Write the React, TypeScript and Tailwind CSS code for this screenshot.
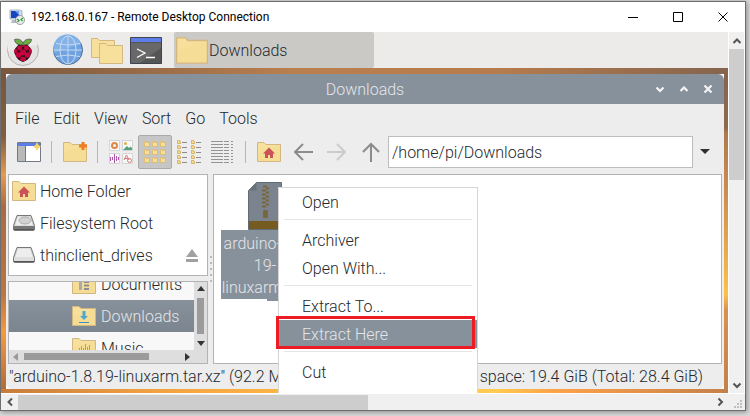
import type { ReactNode } from "react";

const Folder = ({ children, big = false }: { children?: ReactNode; big?: boolean }) => (
  <svg viewBox="0 0 24 20" className={big ? "h-[27px] w-8 shrink-0" : "h-5 w-6 shrink-0"} aria-hidden="true">
    <path d="M.5 19.5V.5h6.500l2 2h14.500v17z" fill="#f7e09b" stroke="#d3b782" />
    <path d="M1 10 L23 3V19H1z" fill="#f4d78b" opacity=".35" />
    {children}
  </svg>
);

const House = () => (
  <path d="M12 5.500l6 6h-2V16h-3v-3h-2v3H8v-4.500H6z" fill="#cb5357" />
);

const Raspberry = () => (
  <svg viewBox="0 0 32 32" className="size-8" aria-hidden="true">
    <circle cx="16" cy="16" r="15.500" fill="#e3e3e3" stroke="#b4b4b4" />
    <path d="M1 17A15 15 0 0 1 31 11z" fill="#ebebeb" />
    <path d="M16 9.500c3 0 5 1 6.500 3.500 3 3 2.500 6 1 8-1 4-4 5.500-7.500 7-3.500-1.500-6.500-3-7.500-7-1.500-2-2-5 1-8C11 10.500 13 9.500 16 9.500z" fill="#2b1019" />
    <g fill="#c7053d">
      <circle cx="16" cy="18.500" r="3" />
      <circle cx="12.500" cy="14" r="2.500" /><circle cx="19.500" cy="14" r="2.500" />
      <circle cx="11.500" cy="21" r="2.700" /><circle cx="20.500" cy="21" r="2.700" />
      <ellipse cx="8.700" cy="17" rx="1.500" ry="2.500" /><ellipse cx="23.300" cy="17" rx="1.500" ry="2.500" />
      <ellipse cx="16" cy="25" rx="2.800" ry="2.200" /><ellipse cx="16" cy="11.500" rx="2.200" ry="1.300" />
    </g>
    <path d="M15.500 11C10 11 8 9 7.500 5.500 11 4.500 15 5.500 16 9.500c1-4 5-5 8.500-4-.5 3.500-2.500 5.500-8 5.500z" fill="#6cab45" stroke="#2b2b2b" strokeWidth=".6" />
  </svg>
);

const Globe = () => (
  <svg viewBox="0 0 32 32" className="size-8" aria-hidden="true">
    <circle cx="16" cy="16" r="14.500" fill="#6ea2e0" stroke="#4f6f99" />
    <path d="M2 19A14 14 0 0 1 29 10z" fill="#83b2e8" />
    <g fill="none" stroke="#c5daf2">
      <ellipse cx="16" cy="16" rx="8" ry="14" />
      <path d="M16 2v28M2 16h28M4 9.500q12 3 24 0M4 22.500q12-3 24 0" />
    </g>
  </svg>
);

const Folders = () => (
  <svg viewBox="0 0 32 27" className="h-[27px] w-8" aria-hidden="true">
    <g fill="#f7e09b" stroke="#d3b782">
      <path d="M.5 20.500V1.500h6l2 2h15v17z" />
      <path d="M8.500 26.500V6.500h6l2 2h15v18z" />
    </g>
  </svg>
);

const Terminal = () => (
  <svg viewBox="0 0 32 27" className="h-[27px] w-8" aria-hidden="true">
    <path d="M.5.5h31v26H.5z" fill="#555" stroke="#3d4450" />
    <path d="M1 6h30v5L10 26H1z" fill="#686868" />
    <path d="M1 1h30v4H1z" fill="#5e7de8" />
    <path d="M7 12l8 4-8 4.500M16 20.500h9" fill="none" stroke="#fff" strokeWidth="1.300" />
  </svg>
);

const Remote = () => (
  <svg viewBox="0 0 16 16" className="size-4" aria-hidden="true">
    <path d="M1 1h10l2 1v8H1z" fill="#d4dbe8" stroke="#9aa6bc" strokeWidth=".8" />
    <path d="M2 2h8v7H2z" fill="#1545c0" />
    <path d="M6 2h4v4z" fill="#6ba2f2" />
    <path d="M3 11h5v3H2z" fill="#b7bdc7" />
    <circle cx="11" cy="11" r="4.500" fill="#ececec" stroke="#8a8a8a" strokeWidth=".8" />
    <path d="M8 10l2 1.500L8.500 13M14 9l-2 1.500 1.500 1.500" fill="none" stroke="#239b31" strokeWidth="1.200" />
  </svg>
);

const NewWindow = () => (
  <svg viewBox="0 0 24 20" className="h-5 w-6" aria-hidden="true">
    <path d="M.5.5h23v19H.5z" fill="#fff" stroke="#747a84" />
    <path d="M1 1h22v3H1z" fill="#5b7de6" />
    <path d="M1 4h7v15H1z" fill="#b9b9b9" />
    <path d="M8.500 4v15" stroke="#777" />
    <path d="M20 0l1.500 3L24 4.500 21.500 6 20 9l-1.500-3L16 4.500 18.500 3z" fill="#f5d565" />
  </svg>
);

const Thumbs = () => (
  <svg viewBox="0 0 24 24" className="size-6" aria-hidden="true">
    <g fill="#f8f8f8" stroke="#d5d5d5">
      <path d="M.5.5h10v10H.5zM13.500.5h10v10h-10zM.5 13.500h10v10H.5zM13.500 13.500h10v10h-10z" />
    </g>
    <circle cx="5.500" cy="5.500" r="2.500" fill="none" stroke="#df8747" strokeWidth="2" />
    <path d="M14 10l4-4 2 2 1.500-1.500L23 8v2z" fill="#54a17c" /><circle cx="16.500" cy="3.500" r="1.500" fill="#e2b243" />
    <path d="M1.500 17v4M3.500 17v3M5.500 14v9M7.500 16v5M9.500 17v3" stroke="#ae55ae" />
    <path d="M15 20l2.500-5 2.500 5M16 18.500h3" fill="none" stroke="#d77878" /><circle cx="20.500" cy="20.500" r="2" fill="none" stroke="#d77878" />
  </svg>
);

const IconGrid = () => (
  <svg viewBox="0 0 24 24" className="size-6" aria-hidden="true">
    {[1, 9, 17].map((y) => [1, 9, 17].map((x) => (
      <path key={`${x}-${y}`} d={`M${x + 0.5} ${y + 0.5}v5h5v-4h-3v-1z`} fill="#f7df94" stroke="#dcbd74" />
    )))}
  </svg>
);

const Compact = () => (
  <svg viewBox="0 0 24 24" className="size-6" aria-hidden="true">
    {[0, 5, 10, 15, 20].map((y) => (
      <g key={y}>
        <path d={`M.5 ${y + 0.5}v3h3v-2h-1v-1zM14.500 ${y + 0.5}v3h3v-2h-1v-1z`} fill="#f7df94" stroke="#d5b468" />
        <path d={`M5 ${y + 2.5}h5M19 ${y + 2.5}h5`} stroke="#8d8d8d" />
      </g>
    ))}
  </svg>
);

const Details = () => (
  <svg viewBox="0 0 24 24" className="size-6" aria-hidden="true">
    {[1, 4, 7, 10, 13, 16, 19, 22].map((y) => (
      <path key={y} d={`M0 ${y + 0.5}h12M13 ${y + 0.5}h5M20 ${y + 0.5}h2`} stroke="#939393" />
    ))}
  </svg>
);

const Arrow = ({ d, light = false }: { d: string; light?: boolean }) => (
  <svg viewBox="0 0 20 20" className="size-5" fill="none" stroke={light ? "#cbcbcb" : "#8b8b8b"} strokeWidth="2" aria-hidden="true">
    <path d={d} />
  </svg>
);

const Chevron = ({ d }: { d: string }) => (
  <svg viewBox="0 0 10 10" className="size-2.5" fill="none" stroke="#555" strokeWidth="2" aria-hidden="true">
    <path d={d} />
  </svg>
);

const Drive = ({ disk = false }: { disk?: boolean }) => (
  <svg viewBox="0 0 24 16" className="h-4 w-6 shrink-0" aria-hidden="true">
    <path d="M5 .5h14l3.500 10V14q0 1.500-1.500 1.500H3Q1.500 15.500 1.500 14v-3.500z" fill="#cecece" stroke="#777" />
    <path d="M6 1.500h12l3 9H3z" fill="#ededed" />
    {disk && <ellipse cx="13" cy="5.500" rx="6" ry="3.500" fill="#d2d2d2" stroke="#aaa" />}
    <path d="M2 11h20v3H2z" fill={disk ? "#777" : "#dedede"} />
    <path d="M2 14.500h20" stroke="#555" />
  </svg>
);

const Archive = () => (
  <svg viewBox="0 0 34 48" className="h-12 w-[34px]" aria-hidden="true">
    <path d="M8.500.5h25v47H.5V8.500z" fill="#7b848e" stroke="#626c77" />
    <path d="M8.500.5v8H.5z" fill="#68727d" />
    <path d="M1 39h32v8H1z" fill="#765b20" />
    <path d="M15 4.500h4M18 6.500h3M14 8.500h4M18 10.500h3M14 12.500h4M18 14.500h3M14 16.500h4M18 18.500h3M14 20.500h4M18 22.500h3M14 24.500h4" stroke="#78663c" strokeWidth="2" />
    <rect x="15" y="28" width="5" height="8" rx="1.500" fill="#78663c" />
  </svg>
);

const Rule = () => <div className="mx-[5px] mt-[3px] mb-1.5 h-px bg-[#e5e5e5]" />;
const ToolRule = () => <div className="h-[22px] w-px bg-[#b5b5b5]" />;

const MenuItem = ({ label }: { label: string }) => (
  <button className="block h-7 w-full pl-[23px] text-left">{label}</button>
);

export default function App() {
  return (
    <div className="h-screen w-full overflow-hidden bg-[#dadada] pt-px pr-1 pb-[5px] font-['Roboto',sans-serif] text-[16px] leading-[23px] font-light text-[#24292d]">
      <div className="flex h-full flex-col border border-[#6e6e6e] bg-white shadow-[1px_1px_5px_#888]">
        <header className="flex h-[30px] shrink-0 items-center pl-2">
          <Remote />
          <h1 className="ml-1.5 flex-1 text-[12px] font-normal text-black">
            192.168.0.167 - Remote Desktop Connection
          </h1>
          <div className="flex gap-[35px] pr-[17px]">
            {[["Minimize", "M0 5.500h10"], ["Maximize", "M.5.5h9v9h-9z"], ["Close", "M.5.5l9 9m0-9l-9 9"]].map(([name, d]) => (
              <button key={name} aria-label={name}>
                <svg viewBox="0 0 10 10" className="size-2.5" fill="none" stroke="#000"><path d={d} /></svg>
              </button>
            ))}
          </div>
        </header>

        <div className="flex min-h-0 flex-1">
          <main className="relative flex min-w-0 flex-1 flex-col overflow-hidden">
            <nav className="flex h-9 shrink-0 items-center bg-[#edebe9] pl-1.5">
              <button aria-label="Applications"><Raspberry /></button>
              <button aria-label="Web browser" className="ml-[13px]"><Globe /></button>
              <button aria-label="File manager" className="ml-[7px]"><Folders /></button>
              <button aria-label="Terminal" className="ml-[7px]"><Terminal /></button>
              <button className="ml-3 flex h-9 w-[200px] items-center rounded-xs bg-[#cbc9c5] pl-0.5">
                <Folder big /><span className="ml-px">Downloads</span>
              </button>
            </nav>
            <div className="h-1.5 shrink-0 bg-[linear-gradient(90deg,#79583f,#b97f4f_40%,#b67c4d_68%,#85644e)]" />

            <div className="flex min-h-0 flex-1">
              <div className="w-[5px] bg-[linear-gradient(180deg,#77563f,#80603f_20%,#e59a50_32%,#a86b42_42%,#b97645_70%,#f59a40_82%,#b06c3a)]" />
              <section className="flex min-w-0 flex-1 flex-col rounded-md bg-[#ededed]">
                <div className="flex h-[30px] shrink-0 items-center rounded-t-md bg-[#87919b] text-[#e3e6e9]">
                  <h2 className="flex-1 pl-[76px] text-center">Downloads</h2>
                  <div className="flex w-[76px] gap-3.5 pl-[7px]">
                    {[["Minimize window", "M1.500 3.500L5 7l3.500-3.500"], ["Maximize window", "M1.500 7L5 3.500 8.500 7"], ["Close window", "M1.500 1.500l7 7m0-7l-7 7"]].map(([name, d]) => (
                      <button key={name} aria-label={name}>
                        <svg viewBox="0 0 10 10" className="size-2.5" fill="none" stroke="#f4f4f4" strokeWidth="2.200"><path d={d} /></svg>
                      </button>
                    ))}
                  </div>
                </div>
                <div className="flex h-7 shrink-0 items-center gap-3.5 pl-[9px]">
                  {["File", "Edit", "View", "Sort", "Go", "Tools"].map((m) => <button key={m}>{m}</button>)}
                </div>
                <div className="flex h-[42px] shrink-0 items-center pr-3.5 pb-0.5 pl-[11px]">
                  <button aria-label="New window"><NewWindow /></button>
                  <div className="mx-2.5"><ToolRule /></div>
                  <button aria-label="New folder" className="ml-px">
                    <Folder><path d="M20 0v8M16 4h8" stroke="#ef7d22" strokeWidth="3" /></Folder>
                  </button>
                  <div className="mx-2.5"><ToolRule /></div>
                  <button aria-label="Thumbnails" className="ml-px"><Thumbs /></button>
                  <button aria-label="Icons" className="ml-[5px] flex size-[34px] items-center justify-center rounded-xs border border-[#aaa] bg-[#c6c6c6]"><IconGrid /></button>
                  <button aria-label="Compact list" className="ml-[5px]"><Compact /></button>
                  <button aria-label="Detailed list" className="ml-2.5"><Details /></button>
                  <div className="mx-2.5"><ToolRule /></div>
                  <button aria-label="Home" className="ml-px"><Folder><House /></Folder></button>
                  <button aria-label="Back" className="ml-3"><Arrow d="M20 10H2M10 2l-8 8 8 8" /></button>
                  <button aria-label="Forward" className="ml-3.5"><Arrow light d="M0 10h18M10 2l8 8-8 8" /></button>
                  <button aria-label="Up" className="ml-3.5"><Arrow d="M10 20V2M2 10l8-8 8 8" /></button>
                  <input aria-label="Path" defaultValue="/home/pi/Downloads" className="ml-[7px] h-8 min-w-0 flex-1 border border-[#bdbdbd] bg-white pl-[3px] outline-none" />
                  <button aria-label="Recent paths" className="ml-[7px]">
                    <svg viewBox="0 0 10 6" className="h-1.5 w-2.5"><path d="M0 0h10L5 5z" fill="#2c3135" /></svg>
                  </button>
                </div>

                <div className="flex min-h-0 flex-1 pr-0.5 pl-0.5">
                  <aside className="flex w-[200px] flex-col gap-[5px]">
                    <ul className="h-[102px] shrink-0 border border-[#b3b3b3] bg-white pr-[9px] pl-[3px]">
                      <li className="flex h-8 items-center gap-1"><Folder><House /></Folder>Home Folder</li>
                      <li className="flex h-8 items-center gap-1"><Drive disk />Filesystem Root</li>
                      <li className="flex h-8 items-center gap-1">
                        <Drive /><span className="flex-1">thinclient_drives</span>
                        <button aria-label="Eject">
                          <svg viewBox="0 0 12 13" className="h-[13px] w-3"><path d="M6 0l6 8H0zM0 10h12v3H0z" fill="#a1a1a1" /></svg>
                        </button>
                      </li>
                    </ul>
                    <div className="flex min-h-0 flex-1 flex-col border border-[#b3b3b3] bg-[#dedede]">
                      <div className="flex min-h-0 flex-1">
                        <ul className="flex-1 overflow-hidden bg-[#f8f8f8]">
                          <li className="-mt-3.5 flex h-8 items-center gap-[5px] pl-[63px]">
                            <Folder><path d="M7 7h3v9H7z" fill="#aaa" /><path d="M12 8h5M12 11.500h5M12 15h5" stroke="#8e8e8e" strokeWidth="2" /></Folder>Documents
                          </li>
                          <li className="flex h-8 items-center gap-[5px] bg-linear-to-b from-[#87919b] to-[#7b858f] pl-[63px] text-[#e3e6e9]">
                            <Folder><path d="M10.500 5h3v5h2.500l-4 4-4-4h2.500z" fill="#4ca8d0" /><path d="M7 16.500h10" stroke="#3794bd" /></Folder>Downloads
                          </li>
                          <li className="flex h-8 items-center gap-[5px] pl-[63px]">
                            <Folder><path d="M7.500 10v5M9.500 8v7M11.500 10v5M13.500 6v9M15.500 9v6M17.500 7v8" stroke="#c58da2" /></Folder>Music
                          </li>
                        </ul>
                        <div className="flex w-[13px] flex-col items-center py-1">
                          <svg viewBox="0 0 8 5" className="h-[5px] w-2"><path d="M0 5h8L4 0z" fill="#30363a" /></svg>
                          <div className="mt-[7px] mb-[7px] w-[7px] flex-1 bg-[#9b9b9b]" />
                          <svg viewBox="0 0 8 5" className="h-[5px] w-2"><path d="M0 0h8L4 5z" fill="#30363a" /></svg>
                        </div>
                      </div>
                      <div className="flex h-[13px] shrink-0 items-center pr-[17px] pl-1">
                        <svg viewBox="0 0 5 8" className="h-2 w-[5px]"><path d="M5 0v8L0 4z" fill="#999" /></svg>
                        <div className="mr-9 ml-1.5 h-[7px] flex-1 bg-[#9b9b9b]" />
                        <svg viewBox="0 0 5 8" className="h-2 w-[5px]"><path d="M0 0v8l5-4z" fill="#30363a" /></svg>
                      </div>
                    </div>
                  </aside>
                  <div className="flex w-[5px] flex-col items-center justify-center gap-1">
                    {[0, 1, 2, 3, 4].map((n) => <i key={n} className="size-0.5 bg-[#bbb]" />)}
                  </div>
                  <div className="min-w-0 flex-1 border border-[#b3b3b3] bg-white pt-[7px] pl-[7px]">
                    <figure className="flex w-[88px] flex-col items-center">
                      <Archive />
                      <figcaption className="w-full bg-[#87919b] pt-[3px] text-center leading-[22px] text-[#e3e6e9]">
                        arduino-1.8.<br />19-<br />linuxarm.tar.
                      </figcaption>
                      <div className="h-0.5 w-[42px] self-end bg-[#87919b]" />
                    </figure>
                  </div>
                </div>
                <footer className="flex h-[25px] shrink-0 items-center justify-between pr-[21px] pl-[3px] whitespace-nowrap">
                  <span>"arduino-1.8.19-linuxarm.tar.xz" (92.2 MiB)</span>
                  <span>Free space: 19.4 GiB (Total: 28.4 GiB)</span>
                </footer>
              </section>
              <div className="w-1 bg-[linear-gradient(180deg,#85644e,#8f6a4c_17%,#b07a4d_19%,#d09050_40%,#ffc04a_70%,#dc8f4f_75%,#c5804a)]" />
            </div>
            <div className="h-1 shrink-0 bg-[linear-gradient(90deg,#c67b3c,#f0a040_20%,#ffb545_40%,#ffcb50_68%,#ffa248_76%,#c5804a)]" />

            <div className="absolute top-[155px] left-[277px] w-[200px] border border-[#d6d6d6] bg-white pb-8">
              <MenuItem label="Open" />
              <Rule />
              <MenuItem label="Archiver" />
              <MenuItem label="Open With..." />
              <Rule />
              <MenuItem label="Extract To..." />
              <div className="relative bg-[#87919b] text-[#e3e6e9]">
                <MenuItem label="Extract Here" />
                <div className="pointer-events-none absolute -top-1 right-0.5 -bottom-px -left-[3px] border-3 border-[#ed1c24]" />
              </div>
              <Rule />
              <MenuItem label="Cut" />
            </div>
          </main>
          <div className="mr-px ml-px flex w-[15px] shrink-0 flex-col items-center bg-[#f0f0f0]">
            <div className="flex h-[17px] items-center"><Chevron d="M1.500 7L5 3.500 8.500 7" /></div>
            <div className="h-[131px] w-full bg-[#cdcdcd]" />
            <div className="mt-auto flex h-[17px] items-center"><Chevron d="M1.500 3.500L5 7l3.500-3.500" /></div>
          </div>
        </div>
        <div className="mt-px flex h-4 shrink-0 items-center bg-[#f0f0f0]">
          <div className="flex w-[17px] justify-center"><Chevron d="M7 1.500L3.500 5 7 8.500" /></div>
          <div className="h-[15px] w-[47%] bg-[#cdcdcd]" />
          <div className="ml-auto flex w-[17px] justify-center"><Chevron d="M3.500 1.500L7 5 3.500 8.500" /></div>
          <svg viewBox="0 0 17 16" className="h-4 w-[17px]" fill="#bfbfbf">
            <path d="M12 6h2v2h-2zM9 9h2v2H9zM12 9h2v2h-2zM6 12h2v2H6zM9 12h2v2H9zM12 12h2v2h-2z" />
          </svg>
        </div>
      </div>
    </div>
  );
}
